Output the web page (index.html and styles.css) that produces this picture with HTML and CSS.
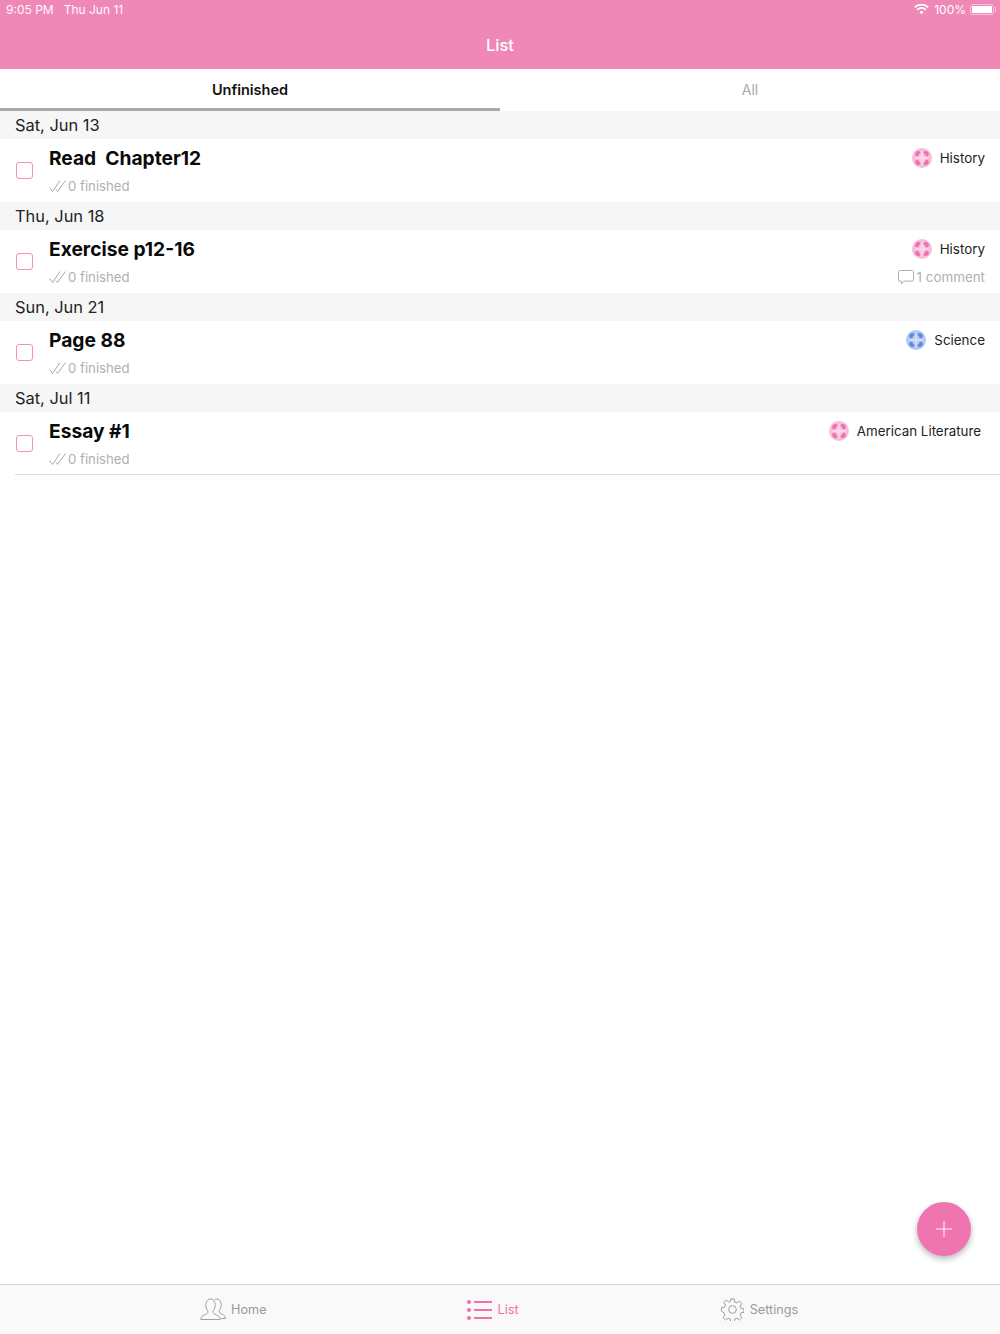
FILE: index.html
```html
<!DOCTYPE html>
<html lang="en">
<head>
<meta charset="utf-8">
<title>List</title>
<link rel="stylesheet" href="styles.css">
</head>
<body>
<svg class="defs" width="0" height="0" aria-hidden="true">
  <defs>
    <symbol id="subject" viewBox="0 0 20 20">
      <circle cx="10" cy="10" r="10" fill="currentColor" opacity=".42"/>
      <g fill="currentColor" opacity=".82">
        <path d="M3 6.500 3.800 4 6 2.800 8.300 3.400 8.600 5.600 7 6 6.400 8.200 4.600 8.600Z"/>
        <path d="M17 6.500 16.200 4 14 2.800 11.700 3.400 11.400 5.600 13 6 13.600 8.200 15.400 8.600Z"/>
        <path d="M3 13.500 3.800 16 6 17.200 8.300 16.600 8.600 14.400 7 14 6.400 11.800 4.600 11.400Z"/>
        <path d="M17 13.500 16.200 16 14 17.200 11.700 16.600 11.400 14.400 13 14 13.600 11.800 15.400 11.400Z"/>
      </g>
      <path d="M10 3.500v13M3.500 10h13" stroke="#fff" stroke-width="2.600" opacity=".38" fill="none"/>
    </symbol>
    <symbol id="ticks" viewBox="0 0 17 12">
      <path d="M.5 7.500 3.500 11.500 11 .5M7 9.500 8.500 11.500 16.500 .5" fill="none" stroke="currentColor" stroke-width="1"/>
    </symbol>
  </defs>
</svg>
<div class="app">
  <header class="top">
    <div class="status">
      <div class="status-left"><span>9:05 PM</span><span>Thu Jun 11</span></div>
      <div class="status-right">
        <svg class="wifi" viewBox="0 0 16 12" width="15" height="11"><path d="M8 11.200 5.700 8.800a3.300 3.300 0 0 1 4.600 0ZM3.900 7 2.600 5.600a7.700 7.700 0 0 1 10.800 0L12.100 7a5.800 5.800 0 0 0-8.200 0ZM1.400 4.400 0 3a11.400 11.400 0 0 1 16 0l-1.400 1.400a9.400 9.400 0 0 0-13.200 0Z" fill="#fff"/></svg>
        <span>100%</span>
        <span class="battery"><span class="battery-fill"></span></span>
      </div>
    </div>
    <h1 class="title">List</h1>
  </header>

  <nav class="tabs">
    <div class="tab tab-active">Unfinished</div>
    <div class="tab">All</div>
  </nav>

  <main class="list">
    <div class="day">Sat, Jun 13</div>
    <article class="row">
      <span class="check"></span>
      <div class="body">
        <div class="name">Read&nbsp; Chapter12</div>
        <div class="meta"><svg class="ticks"><use href="#ticks"/></svg>0 finished</div>
      </div>
      <div class="side">
        <div class="subject"><svg class="badge pink"><use href="#subject"/></svg>History</div>
      </div>
    </article>

    <div class="day">Thu, Jun 18</div>
    <article class="row">
      <span class="check"></span>
      <div class="body">
        <div class="name">Exercise p12-16</div>
        <div class="meta"><svg class="ticks"><use href="#ticks"/></svg>0 finished</div>
      </div>
      <div class="side">
        <div class="subject"><svg class="badge pink"><use href="#subject"/></svg>History</div>
        <div class="meta comment">
          <svg class="bubble" viewBox="0 0 16 15"><path d="M1.500.5h13a1 1 0 0 1 1 1v8.600a1 1 0 0 1-1 1H6L3.400 14V11.100H1.500a1 1 0 0 1-1-1V1.500a1 1 0 0 1 1-1Z" fill="none" stroke="currentColor"/></svg>1 comment
        </div>
      </div>
    </article>

    <div class="day">Sun, Jun 21</div>
    <article class="row">
      <span class="check"></span>
      <div class="body">
        <div class="name">Page 88</div>
        <div class="meta"><svg class="ticks"><use href="#ticks"/></svg>0 finished</div>
      </div>
      <div class="side">
        <div class="subject"><svg class="badge blue"><use href="#subject"/></svg>Science</div>
      </div>
    </article>

    <div class="day">Sat, Jul 11</div>
    <article class="row row-last">
      <span class="check"></span>
      <div class="body">
        <div class="name">Essay #1</div>
        <div class="meta"><svg class="ticks"><use href="#ticks"/></svg>0 finished</div>
      </div>
      <div class="side side-lit">
        <div class="subject"><svg class="badge pink"><use href="#subject"/></svg>American Literature</div>
      </div>
    </article>
  </main>

  <button class="fab" aria-label="Add">
    <svg viewBox="0 0 16 16" width="16" height="16"><path d="M8 0v16M0 8h16" stroke="#fff" stroke-width="1" fill="none"/></svg>
  </button>

  <footer class="tabbar">
    <div class="bar-item bar-home">
      <svg viewBox="0 0 26 23" width="26" height="23" fill="none" stroke="currentColor" stroke-width="1"><path d="M.8 21.500c0-3 1.600-3.600 4-4.700 2.200-1 3.200-1.600 3.200-3 0-1-1.200-2-1.700-3.700C5.700 8.700 5.600 7 6 5.200 6.500 2.500 8.400 1 10.500 1s4 1.500 4.500 4.200c.4 1.800.3 3.500-.3 4.900-.5 1.700-1.700 2.700-1.700 3.700 0 1.400 1 2 3.200 3 2.400 1.100 4 1.700 4 4.700Z"/><path d="M14.800 1.600c.6-.4 1.300-.6 2-.6 2 0 3.700 1.500 4.200 4 .4 1.800.3 3.400-.3 4.800-.5 1.600-1.500 2.600-1.500 3.600 0 1.300 1 1.900 2.900 2.800 2 .9 3.300 1.500 3.300 4.300h-4.500"/></svg>
      <span>Home</span>
    </div>
    <div class="bar-item bar-list">
      <svg viewBox="0 0 25 20" width="25" height="20"><g fill="#f06fae"><circle cx="2" cy="2" r="2"/><circle cx="2" cy="10" r="2"/><circle cx="2" cy="18" r="2"/><rect x="7" y="1" width="18" height="2"/><rect x="7" y="9" width="18" height="2"/><rect x="7" y="17" width="18" height="2"/></g></svg>
      <span>List</span>
    </div>
    <div class="bar-item bar-settings">
      <svg viewBox="0 0 24 24" width="23" height="23" fill="none" stroke="currentColor" stroke-width="1"><circle cx="12" cy="12" r="4"/><path d="M10.200 1h3.600l.6 3.300 2.200.9 2.700-1.900 2.500 2.500-1.900 2.700.9 2.200 3.200.6v3.600l-3.200.6-.9 2.200 1.900 2.700-2.500 2.500-2.700-1.900-2.200.9-.6 3.200h-3.600l-.6-3.200-2.200-.9-2.700 1.900-2.500-2.500 1.900-2.700-.9-2.200L.5 13.800v-3.600l3.300-.6.9-2.200-1.900-2.700 2.500-2.500 2.700 1.900 2.200-.9Z"/></svg>
      <span>Settings</span>
    </div>
  </footer>
</div>
</body>
</html>
```
FILE: styles.css
```css
* { box-sizing: border-box; }
html, body { margin: 0; height: 100%; }
body { font-family: Inter, "Liberation Sans", sans-serif; background: #fff; color: #111; }
.defs { position: absolute; }
.app { position: relative; height: 1334px; display: flex; flex-direction: column; overflow: hidden; }

.top { height: 69px; background: #ef87b7; color: #fff; flex: none; }
.status { height: 19px; padding: 0 6px; display: flex; justify-content: space-between; align-items: center; font-size: 12px; color: #fff; }
.status-left { display: flex; gap: 10px; opacity: .95; }
.status-right { display: flex; align-items: center; gap: 5px; }
.battery { position: relative; width: 24px; height: 11px; border: 1px solid rgba(255,255,255,.5); border-radius: 3px; padding: 1px; display: block; margin-left: -1px; margin-right: 0; }
.battery::after { content: ""; position: absolute; right: -3px; top: 2px; width: 1px; height: 5px; background: rgba(255,255,255,.5); }
.battery-fill { display: block; height: 100%; background: #fff; border-radius: 1px; }
.title { margin: 0; height: 50px; padding-top: 1px; display: flex; align-items: center; justify-content: center; font-size: 16.5px; font-weight: 500; }

.tabs { height: 42px; display: flex; flex: none; }
.tab { flex: 1; display: flex; align-items: center; justify-content: center; font-size: 14px; color: #aaa; padding-top: 2px; border-bottom: 3px solid transparent; }
.tab-active { color: #111; font-size: 14.5px; font-weight: 600; border-bottom-color: #a9a9a9; }

.list { flex: 1; }
.day { height: 28px; background: #f6f6f6; padding-left: 15px; font-size: 16.4px; line-height: 29px; color: #222; }
.row { height: 63px; display: flex; align-items: stretch; padding: 0 15px 0 16px; background: #fff; }
.row-last { position: relative; }
.row-last::after { content: ""; position: absolute; left: 15px; right: 0; bottom: 0; height: 1px; background: #ddd; }
.check { width: 17px; height: 17px; margin-top: 23px; border: 1px solid #f58fc0; border-radius: 3px; flex: none; }
.body { flex: 1; padding-left: 16px; padding-top: 6px; }
.name { font-size: 19.2px; font-weight: 700; line-height: 26px; color: #0a0a0a; height: 26px; }
.meta { font-size: 13.2px; line-height: 20px; color: #b0b0b0; display: flex; align-items: center; margin-top: 5px; }
.ticks { width: 17px; height: 12px; margin-right: 2px; color: #a8a8a8; }
.side { display: flex; flex-direction: column; align-items: flex-end; padding-top: 9px; }
.side-lit { padding-right: 4px; }
.subject { display: flex; align-items: center; font-size: 13.4px; line-height: 20px; color: #222; }
.badge { width: 20px; height: 20px; margin-right: 8px; }
.side-lit .subject { font-size: 13.35px; }
.pink { color: #ee62a8; }
.blue { color: #4b7fe0; }
.comment { margin-top: 8px; font-size: 13.4px; }
.bubble { width: 16px; height: 15px; margin-right: 3px; }

.fab { position: absolute; left: 917px; top: 1202px; width: 54px; height: 54px; border: 0; border-radius: 50%; background: #ee75ae; box-shadow: 0 3px 6px rgba(0,0,0,.28); display: flex; align-items: center; justify-content: center; padding: 0; }

.tabbar { height: 50px; flex: none; background: #f9f9f9; border-top: 1px solid #d6d6d6; display: flex; font-size: 12.7px; color: #999; }
.bar-item { display: flex; align-items: center; gap: 5px; }
.bar-home { margin-left: 200px; color: #a0a0a0; }
.bar-home span { color: #999; }
.bar-list { margin-left: 200px; color: #f06fae; gap: 6px; }
.bar-settings { margin-left: 202px; gap: 6px; color: #999; }
```
